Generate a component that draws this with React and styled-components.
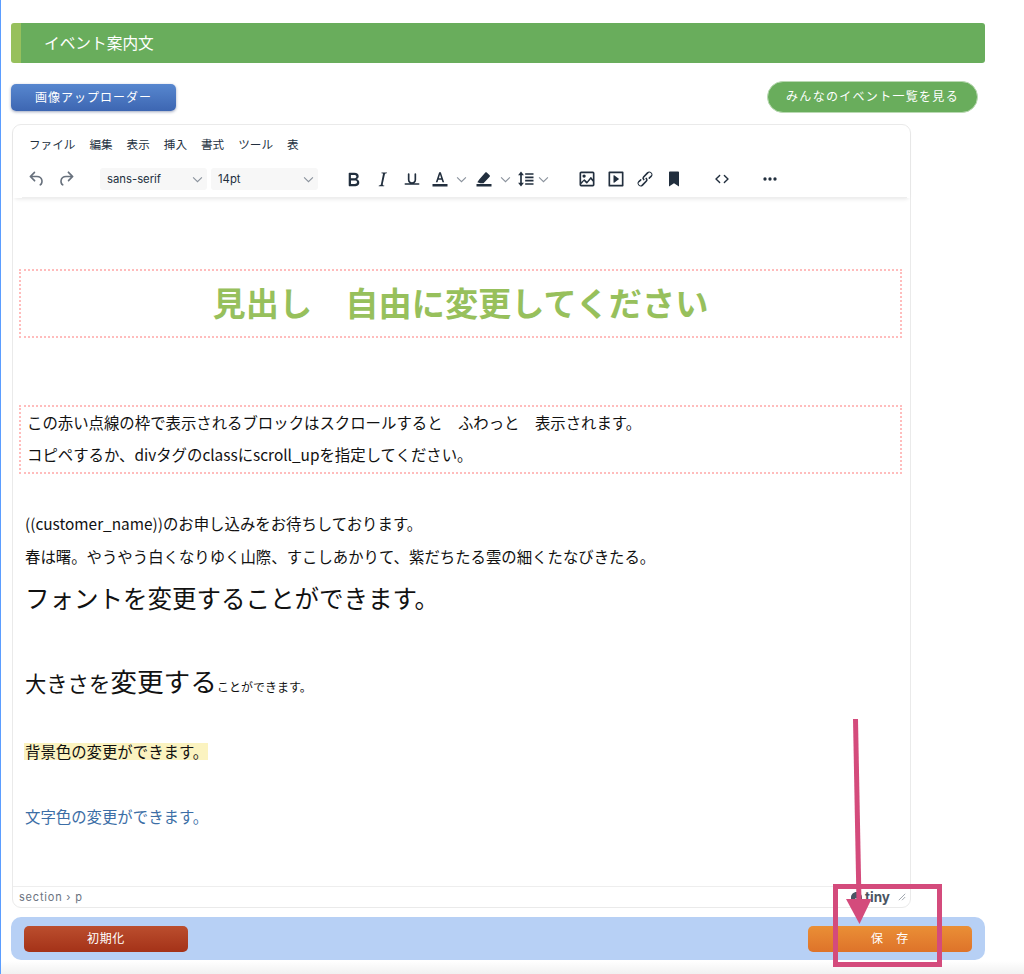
import React from 'react';
import styled, { createGlobalStyle } from 'styled-components';

const JP = `"Noto Sans CJK JP", "Liberation Sans", sans-serif`;

const GlobalStyle = createGlobalStyle`
  html, body {
    margin: 0;
    background: #fff;
    font-family: ${JP};
  }
`;

const Page = styled.div`
  position: relative;
  box-sizing: border-box;
  width: 1024px;
  height: 974px;
  overflow: hidden;
  padding: 23px 0 0 11px;
  border-left: 1px solid #5b9dff;
  background: linear-gradient(to bottom, #fff 0, #fff 961px, #f1f1f1 974px);
`;

const Inner = styled.div`
  width: 974px;
  margin-left: -1px;
`;

const SectionHeader = styled.h2`
  box-sizing: border-box;
  height: 40px;
  margin: 0;
  padding-left: 23px;
  background: #69ad5c;
  border-left: 10px solid #97c05c;
  border-radius: 3px;
  color: #fff;
  font-size: 15.7px;
  font-weight: 400;
  line-height: 39px;
`;

const ActionRow = styled.div`
  display: flex;
  justify-content: space-between;
  align-items: center;
  height: 32px;
  margin-top: 18px;
  padding-right: 7px;
`;

const UploadButton = styled.button`
  width: 165px;
  height: 27px;
  padding: 0 0 2px;
  border: 0;
  border-radius: 5px;
  background: linear-gradient(to bottom, #5787cf, #3d66b2);
  box-shadow: 0 1px 3px rgba(40, 60, 110, 0.45);
  color: #fff;
  font-family: ${JP};
  font-size: 12px;
  letter-spacing: 1px;
`;

const PillButton = styled.button`
  width: 211px;
  height: 32px;
  padding: 0 0 3px;
  border: 1px solid #b9d9b2;
  border-radius: 16px;
  background: #69ad5c;
  color: #fff;
  font-family: ${JP};
  font-size: 12px;
  letter-spacing: 1.3px;
`;

const Editor = styled.div`
  box-sizing: border-box;
  display: flex;
  flex-direction: column;
  width: 899px;
  height: 784px;
  margin: 11px 0 0 1px;
  border: 1px solid #eaeaea;
  border-radius: 9px;
  background: #fff;
`;

const EditorHeader = styled.div`
  flex: none;
  height: 73px;
  padding: 0 3px 0 9px;
  box-shadow: 0 3px 4px -2px rgba(0, 0, 0, 0.1);
`;

const MenuBar = styled.div`
  display: flex;
  gap: 14px;
  height: 40px;
  padding: 10px 0 0 7px;
  box-sizing: border-box;
  color: #222f3e;
  font-size: 11.6px;
  line-height: 18px;
`;

const Toolbar = styled.div`
  display: flex;
  align-items: center;
  height: 28px;
  padding-bottom: 4px;
  border-bottom: 1px solid #eeeeee;
`;

const Tool = styled.span`
  flex: none;
  display: flex;
  align-items: center;
  justify-content: center;
  width: ${(p) => p.$w || 29}px;
  height: 22px;
  margin-left: ${(p) => p.$gap || 0}px;
  color: ${(p) => (p.$muted ? '#68717d' : '#222f3e')};

  svg {
    fill: currentColor;
  }
`;

const SelectBox = styled.span`
  flex: none;
  box-sizing: border-box;
  display: flex;
  align-items: center;
  justify-content: space-between;
  width: 107px;
  height: 22px;
  margin-left: ${(p) => p.$gap || 0}px;
  padding: 0 4px 0 7px;
  border-radius: 3px;
  background: #f7f7f7;
  color: #222f3e;
  font-family: "Inter", "Liberation Sans", sans-serif;
  font-size: 11.3px;
`;

const Content = styled.div`
  flex: 1;
  padding: 71px 8px 0 6px;
  color: #111;
  font-size: 15.4px;
`;

const ScrollBox = styled.div`
  box-sizing: border-box;
  height: ${(p) => p.$h}px;
  margin-bottom: ${(p) => p.$mb || 0}px;
  padding: ${(p) => (p.$pad ? '0 6px' : 0)};
  border: 2px dotted #ffbcbc;
`;

const Heading = styled.div`
  color: #97c05c;
  font-size: 33.2px;
  font-weight: 700;
  line-height: 62px;
  text-align: center;
`;

// line box is 2px shorter than the row, that sits the text a pixel higher
const Line = styled.p`
  margin: 0;
  height: ${(p) => p.$h || 33}px;
  line-height: ${(p) => (p.$h || 33) - 2}px;
  padding-left: ${(p) => (p.$flush ? 0 : 6)}px;
  margin-top: ${(p) => p.$mt || 0}px;
  color: ${(p) => p.$color || 'inherit'};
  font-size: ${(p) => p.$size || 15.4}px;
  white-space: nowrap;
`;

const Sized = styled.span`
  font-size: ${(p) => p.$size}px;
`;

const Marked = styled.span`
  display: inline-block;
  margin-left: -1px;
  width: 183px;
  height: 17px;
  line-height: 17px;
  padding-left: 1px;
  background: #fbf3c0;
`;

const StatusBar = styled.div`
  flex: none;
  box-sizing: border-box;
  display: flex;
  align-items: center;
  justify-content: space-between;
  height: 21px;
  padding: 0 4px 0 6px;
  border-top: 1px solid #eeeeee;
  color: #6b7380;
  font-family: "Inter", "Liberation Sans", sans-serif;
  font-size: 11px;
  letter-spacing: 0.8px;
`;

const Branding = styled.span`
  display: flex;
  align-items: center;
  gap: 2px;
  color: #4a5563;
  font-size: 13.5px;
  font-weight: 700;
  letter-spacing: 0;
`;

const BottomBar = styled.div`
  box-sizing: border-box;
  display: flex;
  justify-content: space-between;
  align-items: center;
  height: 43px;
  margin-top: 9px;
  padding: 0 13px;
  border-radius: 10px;
  background: #b7d0f5;
`;

const FootButton = styled.button`
  width: 164px;
  height: 26px;
  padding: 0 0 3px;
  border: 0;
  border-radius: 5px;
  background: ${(p) =>
    p.$tone === 'orange'
      ? 'linear-gradient(to bottom, #ea8f36, #de732a)'
      : 'linear-gradient(to bottom, #bb4e2e, #a43218)'};
  color: #fff;
  font-family: ${JP};
  font-size: 12px;
  letter-spacing: 0.6px;
`;

const Annotation = styled.svg`
  position: absolute;
  left: -1px;
  top: 0;
  pointer-events: none;
`;

const Icon = ({ d, size = 20 }) => (
  <svg width={size} height={size} viewBox="0 0 24 24">
    <path d={d} />
  </svg>
);

const Chevron = () => (
  <svg width="11" height="11" viewBox="0 0 10 10" style={{ flex: 'none' }}>
    <path d="M1 3l4 4 4-4" fill="none" stroke="#8a929c" strokeWidth="1" />
  </svg>
);

const icons = {
  undo: 'M6.4 8H12c3.7 0 6.2 2 6.8 5.1.6 2.7-.4 5.6-2.3 6.8a1 1 0 0 1-1-1.8c1.1-.6 1.8-2.7 1.4-4.6-.5-2.1-2.1-3.5-4.9-3.5H6.4l3.3 3.3a1 1 0 1 1-1.4 1.4l-5-5a1 1 0 0 1 0-1.4l5-5a1 1 0 0 1 1.4 1.4L6.4 8z',
  redo: 'M17.6 10H12c-2.8 0-4.4 1.4-4.9 3.5-.4 2 .3 4 1.4 4.6a1 1 0 1 1-1 1.8c-2-1.2-2.9-4.1-2.3-6.8.6-3 3-5.1 6.8-5.1h5.6l-3.3-3.3a1 1 0 1 1 1.4-1.4l5 5a1 1 0 0 1 0 1.4l-5 5a1 1 0 0 1-1.4-1.4l3.3-3.3z',
  bold: 'M7.8 19c-.3 0-.5 0-.6-.2l-.2-.5V5.7c0-.2 0-.4.2-.5l.6-.2h5c1.5 0 2.7.3 3.5 1 .7.6 1.1 1.4 1.1 2.5a3 3 0 0 1-.6 1.9c-.4.6-1 1-1.6 1.2.4.1.9.3 1.3.6s.8.7 1 1.2c.4.4.5 1 .5 1.6 0 1.3-.4 2.3-1.3 3-.8.7-2.1 1-3.8 1H7.8zm5-8.3c.6 0 1.2-.1 1.6-.5.4-.3.6-.7.6-1.3 0-1.1-.8-1.7-2.3-1.7H9.3v3.5h3.4zm.5 6c.7 0 1.3-.1 1.7-.4.4-.4.6-.9.6-1.5s-.2-1-.7-1.4c-.4-.3-1-.4-2-.4H9.4v3.8h4z',
  italic: 'M16.7 4.7l-.1.9h-.3c-.6 0-1 0-1.4.3-.3.3-.4.6-.5 1.1l-2.1 9.8v.6c0 .5.4.8 1.4.8h.2l-.2.8H8l.2-.8h.2c1.1 0 1.8-.5 2-1.5l2-9.8.1-.5c0-.6-.4-.8-1.4-.8h-.3l.2-.9h5.8z',
  underline: 'M16 5c.6 0 1 .4 1 1v7c0 2.8-2.2 5-5 5s-5-2.2-5-5V6c0-.6.4-1 1-1s1 .4 1 1v7c0 1.7 1.3 3 3 3s3-1.3 3-3V6c0-.6.4-1 1-1zM4 17h16c.6 0 1 .4 1 1s-.4 1-1 1H4a1 1 0 1 1 0-2z',
  textColor: 'M3 18h18v3H3zM7 16l4-12h2l4 12h-2l-1-3.2h-4L9 16H7zm3.6-5h2.8L12 6.6 10.6 11z',
  highlight: 'M3 18h18v3H3zM4 16l2.5-3.6 7.1-8.2c.5-.5 1.2-.5 1.7 0l3.5 3.4c.5.5.5 1.2 0 1.7l-7.4 7.7H7.5L4 16z',
  lineHeight: 'M6 3l3.5 4.5H7v9h2.5L6 21l-3.5-4.5H5v-9H2.5L6 3zM11 5h10v2H11V5zm0 4h10v2H11V9zm0 4h10v2H11v-2zm0 4h10v2H11v-2z',
  image: 'M5 15.7l3.3-3.2c.3-.3.7-.3 1 0L12 15l4.1-5c.3-.4.8-.4 1.1 0l1.8 2.3V5H5v10.7zM5 18.3V19h14v-3.6l-2.5-3.2-4.1 5c-.3.4-.8.4-1.1.1l-2.9-2.8L5 18.3zM19 3a2 2 0 0 1 2 2v14a2 2 0 0 1-2 2H5a2 2 0 0 1-2-2V5c0-1.1.9-2 2-2h14zM8.5 6.5a2 2 0 1 1 0 4 2 2 0 0 1 0-4z',
  media: 'M4 3h16c.6 0 1 .4 1 1v16c0 .6-.4 1-1 1H4a1 1 0 0 1-1-1V4c0-.6.4-1 1-1zm1 2v14h14V5H5zm4.8 2.6l5.6 4a.5.5 0 0 1 0 .8l-5.6 4A.5.5 0 0 1 9 16V8a.5.5 0 0 1 .8-.4z',
  link: 'M6.2 12.3a1 1 0 0 1 1.4 1.4l-2 2a2 2 0 1 0 2.6 2.8l4.8-4.8a1 1 0 0 0 0-1.4 1 1 0 1 1 1.4-1.3 2.9 2.9 0 0 1 0 4L9.6 20a3.9 3.9 0 0 1-5.5-5.5l2-2zm11.6-.6a1 1 0 0 1-1.4-1.4l2-2a2 2 0 1 0-2.6-2.8L11 10.3a1 1 0 0 0 0 1.4 1 1 0 1 1-1.4 1.3 2.9 2.9 0 0 1 0-4L14.4 4a3.9 3.9 0 0 1 5.5 5.5l-2 2z',
  bookmark: 'M6 4v17l6-4 6 4V4c0-.6-.4-1-1-1H7a1 1 0 0 0-1 1z',
  code: 'M9.8 15.7c.3.3.3.8 0 1-.3.4-.9.4-1.2 0l-4.4-4.1a.8.8 0 0 1 0-1.2l4.4-4.2c.3-.3.9-.3 1.2 0 .3.3.3.8 0 1.1L6 12l3.8 3.7zM14.2 15.7c-.3.3-.3.8 0 1 .4.4.9.4 1.2 0l4.4-4.1c.3-.3.3-.9 0-1.2l-4.4-4.2a.8.8 0 0 0-1.2 0c-.3.3-.3.8 0 1.1L18 12l-3.8 3.7z',
  more: 'M6 10a2 2 0 1 1 0 4 2 2 0 0 1 0-4zm6 0a2 2 0 1 1 0 4 2 2 0 0 1 0-4zm6 0a2 2 0 1 1 0 4 2 2 0 0 1 0-4z',
};

const menus = ['ファイル', '編集', '表示', '挿入', '書式', 'ツール', '表'];

const App = () => (
  <>
    <GlobalStyle />
    <Page>
      <Inner>
        <SectionHeader>イベント案内文</SectionHeader>
        <ActionRow>
          <UploadButton>画像アップローダー</UploadButton>
          <PillButton>みんなのイベント一覧を見る</PillButton>
        </ActionRow>

        <Editor>
          <EditorHeader>
            <MenuBar>
              {menus.map((m) => (
                <span key={m}>{m}</span>
              ))}
            </MenuBar>
            <Toolbar>
              <Tool $muted><Icon d={icons.undo} /></Tool>
              <Tool $muted><Icon d={icons.redo} /></Tool>
              <SelectBox $gap={20}>sans-serif<Chevron /></SelectBox>
              <SelectBox $gap={4}>14pt<Chevron /></SelectBox>
              <Tool $gap={21}><Icon d={icons.bold} size={23} /></Tool>
              <Tool><Icon d={icons.italic} size={23} /></Tool>
              <Tool><Icon d={icons.underline} /></Tool>
              <Tool $w={28}><Icon d={icons.textColor} /></Tool>
              <Tool $w={15}><Chevron /></Tool>
              <Tool><Icon d={icons.highlight} /></Tool>
              <Tool $w={15}><Chevron /></Tool>
              <Tool $w={26}><Icon d={icons.lineHeight} /></Tool>
              <Tool $w={8}><Chevron /></Tool>
              <Tool $gap={25}><Icon d={icons.image} /></Tool>
              <Tool><Icon d={icons.media} /></Tool>
              <Tool><Icon d={icons.link} /></Tool>
              <Tool><Icon d={icons.bookmark} /></Tool>
              <Tool $gap={19}><Icon d={icons.code} /></Tool>
              <Tool $gap={19}><Icon d={icons.more} /></Tool>
            </Toolbar>
          </EditorHeader>

          <Content>
            <ScrollBox $h={69} $mb={67}>
              <Heading>見出し　自由に変更してください</Heading>
            </ScrollBox>
            <ScrollBox $h={69} $mb={34} $pad>
              <Line $flush $h={32}>この赤い点線の枠で表示されるブロックはスクロールすると　ふわっと　表示されます。</Line>
              <Line $flush>コピペするか、divタグのclassにscroll_upを指定してください。</Line>
            </ScrollBox>
            <Line>((customer_name))のお申し込みをお待ちしております。</Line>
            <Line>春は曙。やうやう白くなりゆく山際、すこしあかりて、紫だちたる雲の細くたなびきたる。</Line>
            <Line $h={50} $size={24.5}>フォントを変更することができます。</Line>
            <Line $h={34} $mt={41} $size={21.3}>
              大きさを<Sized $size={26.7}>変更する</Sized><Sized $size={12}>ことができます。</Sized>
            </Line>
            <Line $mt={37}><Marked>背景色の変更ができます。</Marked></Line>
            <Line $mt={32} $color="#3c6ea6">文字色の変更ができます。</Line>
          </Content>

          <StatusBar>
            <span>section › p</span>
            <Branding>
              <svg width="13" height="13" viewBox="0 0 13 13">
                <path d="M6.5 1C3.5 1 1 3.4 1 6.5V12h4V7.5h4V12h3V6.5C12 3.4 9.5 1 6.5 1z" fill="#4a5563" />
              </svg>
              tiny
              <svg width="8" height="8" viewBox="0 0 10 10" style={{ marginLeft: 6 }}>
                <path d="M1 9l8-8M5 9l4-4" stroke="#8a929c" strokeWidth="1" fill="none" />
              </svg>
            </Branding>
          </StatusBar>
        </Editor>

        <BottomBar>
          <FootButton>初期化</FootButton>
          <FootButton $tone="orange">保　存</FootButton>
        </BottomBar>
      </Inner>

      <Annotation width="1024" height="974" viewBox="0 0 1024 974">
        <rect x="835.5" y="886.5" width="104" height="78" fill="none" stroke="#d44b7c" strokeWidth="5" />
        <path d="M855.5 719L859 902" stroke="#d44b7c" strokeWidth="5" fill="none" />
        <path d="M846 899h25.5l-12 25z" fill="#d44b7c" />
      </Annotation>
    </Page>
  </>
);

export default App;
